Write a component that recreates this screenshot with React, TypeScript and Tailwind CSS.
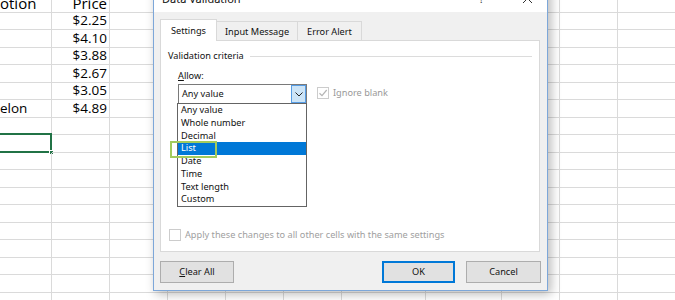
const ui = "font-['Segoe_UI','Noto_Sans',sans-serif]"
const sheet = "font-['Open_Sans','Lato',sans-serif]"

const cols = "grid grid-cols-[52px_58px_58px_58px_58px_58px_84px_76px_58px_58px_58px]"

const prices = ["$2.25", "$4.10", "$3.88", "$2.67", "$3.05", "$4.89"]
const options = ["Any value", "Whole number", "Decimal", "List", "Date", "Time", "Text length", "Custom"]

function Sheet() {
  const rows = Array.from({ length: 18 }, (_, i) => i)
  return (
    <div className={`-mt-[5px] ${sheet}`}>
      {rows.map(r => (
        <div key={r} className={`${cols} h-[17.5px]`}>
          {Array.from({ length: 11 }, (_, c) => {
            let text = ""
            let right = false
            if (r === 0 && c === 0) text = "otion"
            if (r === 0 && c === 1) { text = "Price"; right = true }
            if (r >= 1 && r <= 6 && c === 1) { text = prices[r - 1]; right = true }
            if (r === 6 && c === 0) text = "elon"
            const selected = r === 8 && c === 0
            return (
              <div
                key={c}
                className={`relative flex items-center border-r border-b border-[#dadada] text-black leading-none whitespace-nowrap ${r === 0 ? "text-[15px]" : "text-[13.5px]"} ${right ? "justify-end pr-[2px]" : "pl-0"}`}
              >
                {text}
                {selected && (
                  <>
                    <div className="absolute -top-[2px] -left-[2px] -right-[1px] -bottom-[1px] border-2 border-[#217346]" />
                    <div className="absolute -right-[3px] -bottom-[3px] w-[5px] h-[5px] bg-[#217346] border border-white" />
                  </>
                )}
              </div>
            )
          })}
        </div>
      ))}
    </div>
  )
}

function Check({ disabled, checked }: { disabled?: boolean; checked?: boolean }) {
  return (
    <div className={`w-[12px] h-[12px] border ${disabled ? "border-[#cccccc]" : "border-[#333]"} bg-white flex items-center justify-center`}>
      {checked && (
        <svg width="10" height="10" viewBox="0 0 10 10">
          <path d="M1.5 5.2 L4 7.6 L8.7 2" fill="none" stroke="#b5b5b5" strokeWidth="1.2" />
        </svg>
      )}
    </div>
  )
}

function Dialog() {
  return (
    <div className={`absolute left-[153px] -top-[20px] w-[395px] h-[311px] flex flex-col border border-[#7da7d9] bg-[#f0f0f0] shadow-[3px_3px_10px_rgba(0,0,0,0.28)] ${ui} text-[9.2px] text-[#111]`}>
      <div className="h-[31px] bg-white flex items-start pt-[10px] pl-[8px] pr-[14px] text-[11px] leading-[16px]">
        <span>Data Validation</span>
        <span className="ml-auto mr-[38px] text-[#444]">?</span>
        <svg width="11" height="11" viewBox="0 0 11 11" className="mt-[2px]">
          <path d="M1 1 L10 10 M10 1 L1 10" stroke="#333" strokeWidth="1" />
        </svg>
      </div>
      <div className="flex flex-col px-[6px] pt-[7px]">
        <div className="flex items-end h-[21px] leading-[14px]">
          <div className="relative z-10 -mb-px h-[22px] px-[10px] pt-[4px] bg-white border border-b-0 border-[#d9d9d9]">Settings</div>
          <div className="h-[19px] px-[8px] pt-[3px] border border-l-0 border-b-0 border-[#d9d9d9]">Input Message</div>
          <div className="h-[19px] px-[9px] pt-[3px] border border-l-0 border-b-0 border-[#d9d9d9]">Error Alert</div>
        </div>
        <div className="relative w-[380px] h-[212px] bg-white border border-[#d9d9d9] flex flex-col leading-[14px]">
          <div className="flex items-center pt-[8px] pl-[7px] pr-[7px]">
            <span>Validation criteria</span>
            <div className="flex-1 h-px bg-[#dcdcdc] ml-[6px]" />
          </div>
          <div className="pl-[17px] mt-[6px]"><span className="underline">A</span>llow:</div>
          <div className="relative flex items-start pl-[17px] mt-[1px]">
            <div className="relative w-[129px] h-[20px] border border-[#7a7a7a] bg-white flex items-center pl-[3px]">
              Any value
              <div className="absolute right-0 top-0 bottom-0 w-[15px] bg-[#cce4f7] border border-[#569de5] flex items-center justify-center">
                <svg width="8" height="5" viewBox="0 0 8 5">
                  <path d="M0.5 0.5 L4 4 L7.5 0.5" fill="none" stroke="#222" strokeWidth="1" />
                </svg>
              </div>
              <div className="absolute left-[-2px] top-[18px] w-[130px] h-[104px] border border-[#646464] bg-white z-10">
                {options.map(o => (
                  <div key={o} className={`h-[12.75px] leading-[12.75px] pl-[3px] ${o === "List" ? "bg-[#0078d7] text-white" : ""}`}>{o}</div>
                ))}
              </div>
            </div>
            <div className="flex items-center ml-[10px] mt-[2px] text-[#999]">
              <Check disabled checked />
              <span className="ml-[4px]">Ignore blank</span>
            </div>
          </div>
          <div className="mt-auto mb-[9px] pl-[8px] flex items-center text-[#a0a0a0]">
            <Check disabled />
            <span className="ml-[4px]">Apply these changes to all other cells with the same settings</span>
          </div>
          <div className="absolute left-[9px] top-[100px] w-[47px] h-[17px] border-[2.5px] border-[#a3cb5d] z-20" />
        </div>
        <div className="flex mt-[9px]">
          <button className="w-[74px] h-[22px] bg-[#e1e1e1] border border-[#adadad]"><span className="underline">C</span>lear All</button>
          <button className="ml-auto w-[73px] h-[22px] bg-[#e1e1e1] border-2 border-[#0078d7]">OK</button>
          <button className="ml-[11px] w-[75px] h-[22px] bg-[#e1e1e1] border border-[#adadad]">Cancel</button>
        </div>
      </div>
    </div>
  )
}

export default function App() {
  return (
    <div className="relative w-[675px] h-[300px] overflow-hidden bg-white">
      <Sheet />
      <Dialog />
    </div>
  )
}
